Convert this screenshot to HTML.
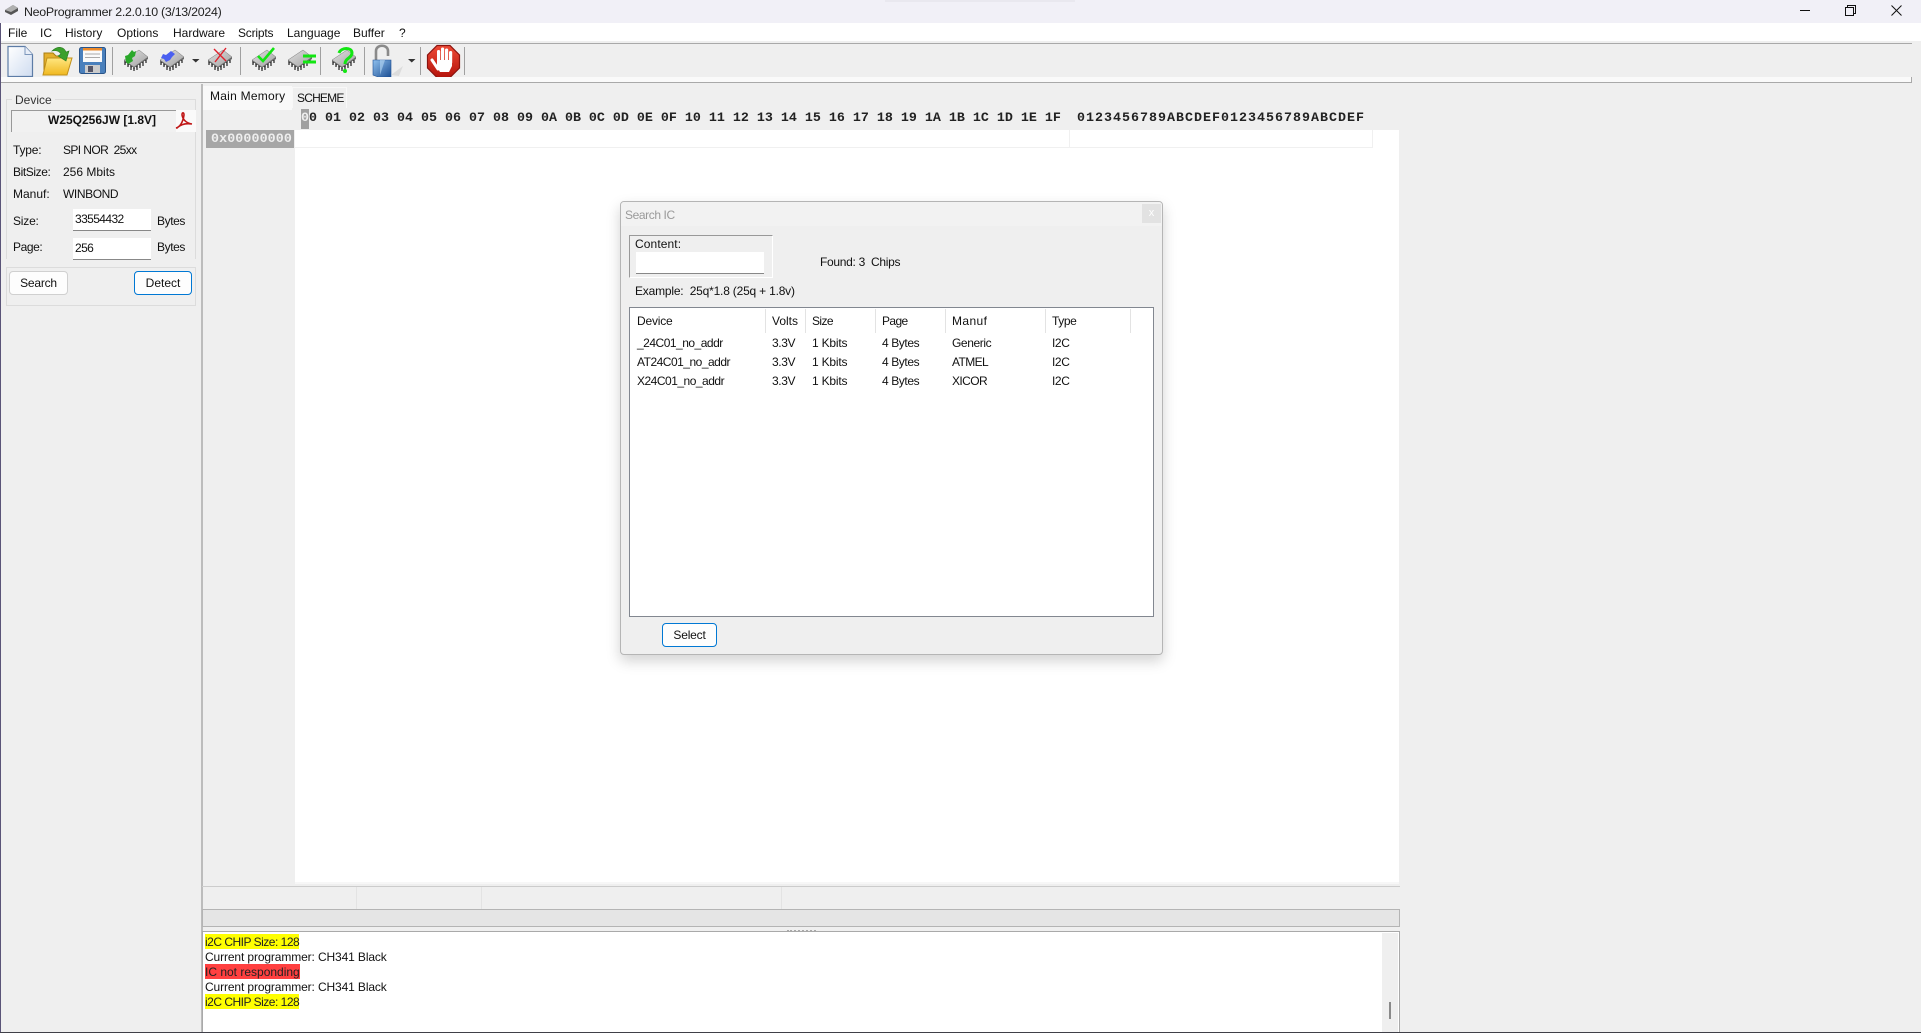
<!DOCTYPE html>
<html><head><meta charset="utf-8"><title>NeoProgrammer</title>
<style>
html,body{margin:0;padding:0;width:1921px;height:1033px;overflow:hidden;background:#efefef}
body{position:relative;font-family:"Liberation Sans",sans-serif;font-size:12px;color:#111}
.b{position:absolute;box-sizing:border-box}
.t{position:absolute;white-space:nowrap;line-height:16px;height:16px}
.m{position:absolute;white-space:nowrap;line-height:18px;font-family:"Liberation Mono",monospace;font-weight:bold;font-size:13.33px;color:#222}
.btn{position:absolute;box-sizing:border-box;background:#fdfdfd;border:1px solid #d0d0d0;border-radius:4px;text-align:center;line-height:22px}
.blue{border-color:#0078d4}
.s{position:absolute;width:1px;background:#e3e3e3}
.a{letter-spacing:-.2px}.c{letter-spacing:-.4px}.d{letter-spacing:-.6px}
</style></head><body>
<!-- title bar -->
<div class="b" style="left:0;top:0;width:1921px;height:23px;background:#f1f0f7"></div>
<div class="b" style="left:885px;top:0;width:190px;height:2px;background:#e9e8ef"></div>
<svg class="b" style="left:5px;top:4px" width="13" height="12"><path d="M0 6L8 1l5 3v3l-7 4-6-3z" fill="#555"/><path d="M0 6L8 1l5 3-7 4z" fill="#b0b0b0"/></svg>
<div class="t" style="left:24px;top:4px;font-size:12.4px;color:#222;letter-spacing:-.27px">NeoProgrammer 2.2.0.10 (3/13/2024)</div>
<svg class="b" style="left:1795px;top:0" width="126" height="23" fill="none" stroke="#111" stroke-width="1">
<path d="M5 10.5h10"/><path d="M50.5 7.5h8v8h-8zM52.5 7.5v-2h8v8h-2"/><path d="M96.5 5.5l10 10M106.5 5.5l-10 10"/></svg>
<!-- menu -->
<div class="b" style="left:0;top:23px;width:1921px;height:18px;background:#fff"></div>
<div class="t" style="left:8px;top:25px">File</div><div class="t" style="left:40px;top:25px">IC</div><div class="t" style="left:65px;top:25px">History</div><div class="t" style="left:117px;top:25px">Options</div><div class="t" style="left:173px;top:25px">Hardware</div><div class="t a" style="left:238px;top:25px">Scripts</div><div class="t" style="left:287px;top:25px">Language</div><div class="t" style="left:353px;top:25px">Buffer</div><div class="t" style="left:399px;top:25px">?</div>
<div class="b" style="left:0;top:43px;width:1912px;height:1px;background:#a9a9a9"></div>
<!-- toolbar icons -->
<svg class="b" style="left:0;top:40px" width="480" height="42" viewBox="0 40 480 42">
<defs>
<linearGradient id="doc" x1="0" y1="0" x2="1" y2="1"><stop offset="0" stop-color="#fff"/><stop offset="1" stop-color="#cfdcf0"/></linearGradient>
<linearGradient id="fold" x1="0" y1="0" x2="0" y2="1"><stop offset="0" stop-color="#ffe680"/><stop offset="1" stop-color="#f0b820"/></linearGradient>
<linearGradient id="chip" x1="0" y1="0" x2="1" y2="1"><stop offset="0" stop-color="#e2e2e2"/><stop offset="1" stop-color="#a0a0a0"/></linearGradient>
<linearGradient id="lock" x1="0" y1="0" x2="1" y2="1"><stop offset="0" stop-color="#8fc0ee"/><stop offset="1" stop-color="#1c4f94"/></linearGradient>
<linearGradient id="red" x1="0" y1="0" x2="0" y2="1"><stop offset="0" stop-color="#ee4a36"/><stop offset="1" stop-color="#b5140c"/></linearGradient>
<g id="c">
<path d="M0 11L15 1l9 7L10 18z" fill="url(#chip)" stroke="#777" stroke-width=".5"/>
<path d="M0 11v2l10 7 14-10V8L10 18z" fill="#6a6a6a"/>
<path d="M1 13v3M4 15v3M7 17v4M10 19v3M13 17v4M16 15v4M19 13v4M22 11v3" stroke="#222" stroke-width="1.2"/>
<path d="M2.5 14v2M5.5 16v3M8.5 18v3M11.5 18v3M14.5 16v3M17.500 14v3M20.500 12v3" stroke="#f4f4f4" stroke-width="1"/>
</g>
</defs>
<!-- new -->
<path d="M8 46.5h17l7.5 8v22H8z" fill="url(#doc)" stroke="#5d7ca6" stroke-width="1.2"/><path d="M25 46.5v8h7.5" fill="#e8eef8" stroke="#7d97bb"/>
<!-- open -->
<path d="M44 53h9l3 3h10v18H44z" fill="#e5b02c" stroke="#a87c10"/><path d="M47 58h25l-5 17H43z" fill="url(#fold)" stroke="#c0901a"/>
<path d="M52 51c6-6 12-4 14 1l3-1-3 10-8-5 3-2c-2-3-5-4-9-3z" fill="#3aa02c" stroke="#2a7a20" stroke-width=".6"/>
<!-- save -->
<rect x="79.5" y="47.5" width="26" height="26" rx="2" fill="#4a80bc" stroke="#2a5488"/><rect x="83" y="48" width="19" height="14" fill="#fafafa"/><rect x="83" y="48" width="19" height="2.5" fill="#ec8a2a"/><path d="M85 54h15M85 57.5h15" stroke="#aaa"/><rect x="85" y="65" width="15" height="8" fill="#ccc"/><rect x="88" y="66" width="5" height="6" fill="#556"/>
<path d="M112.5 47v28M240.5 47v28M320.5 47v28M364.5 47v28M420.5 47v28M464.5 47v28" stroke="#a0a0a0"/>
<!-- chips -->
<use href="#c" x="124" y="49"/><path d="M126 62l-1-6 3-1 4-5 2 2 2-1-1 5-3 2 1 3-5 3z" fill="#2aa82a"/>
<use href="#c" x="160" y="49"/><path d="M161 58l2-4 3 1 5-4 4 3-3 3-2 3-4 2-2-3z" fill="#4a5ff0"/>
<path d="M192 59h7.5l-3.75 3.5z" fill="#333"/>
<use href="#c" x="208" y="49"/><path d="M214 49l12 12M226 48l-11 14" stroke="#e0202c" stroke-width="1.4"/>
<use href="#c" x="252" y="49"/><path d="M258 56l5 5 11-13" stroke="#12e612" stroke-width="2.6" fill="none"/>
<use href="#c" x="288" y="49"/><path d="M303 56h13M303 62h13" stroke="#12e612" stroke-width="3"/>
<use href="#c" x="332" y="49"/><path d="M339 53c2-6 13-6 13 0 0 5-7 5-7 11" stroke="#12e612" stroke-width="3" fill="none"/><circle cx="345" cy="71" r="2" fill="#12e612"/>
<!-- lock -->
<path d="M376 61V51c0-7 12-7 12 0v5" fill="none" stroke="#8a8a8a" stroke-width="2.6"/>
<path d="M373 60h18v17h-13l-5-2z" fill="url(#lock)" stroke="#1c4f94" stroke-width=".6"/><path d="M380 60h5l-5 15z" fill="#b8d8f4" opacity=".6"/><path d="M391 75l12-9-4 10z" fill="#dcdcdc"/>
<path d="M408 59h7.5l-3.75 3.5z" fill="#333"/>
<!-- stop -->
<path d="M437 45.5h13l9.5 9.5v13l-9.5 9.5h-13l-9.5-9.5V55z" fill="url(#red)" stroke="#8a1410" stroke-width="1.2"/>
<g fill="#fff"><rect x="437" y="50" width="3.2" height="14" rx="1.5"/><rect x="441" y="47.500" width="3.200" height="16" rx="1.500"/><rect x="445" y="48.500" width="3.200" height="15" rx="1.500"/><rect x="449" y="51" width="3.200" height="13" rx="1.500"/><path d="M437 60h15v6l-3 6h-9l-3-5z"/></g>
<path d="M432 60l6 9" stroke="#fff" stroke-width="3" stroke-linecap="round"/>
</svg>
<div class="b" style="left:0;top:77px;width:1912px;height:6px;background:#fafafa;border-right:1px solid #a9a9a9;border-bottom:1px solid #a9a9a9"></div>
<!-- left edge -->
<div class="b" style="left:0;top:23px;width:1px;height:1010px;background:#5a5478"></div>
<div class="b" style="left:201px;top:84px;width:2px;height:949px;background:#bcbcbc"></div>
<!-- device group -->
<div class="b" style="left:6px;top:99px;width:190px;height:160px;border:1px solid #dcdcdc;border-bottom:0"></div>
<div class="t" style="left:12px;top:92px;background:#efefef;padding:0 3px;color:#333">Device</div>
<div class="b" style="left:11px;top:110px;width:165px;height:22px;border-left:1px solid #999;border-top:1px solid #999;background:#f1f1f1"></div>
<div class="t" style="left:48px;top:112px;font-weight:bold;font-size:12px">W25Q256JW [1.8V]</div>
<div class="b" style="left:176px;top:110px;width:20px;height:22px;background:#fafafa"></div>
<svg class="b" style="left:175px;top:111px" width="19" height="20" fill="none" stroke="#c01818" stroke-width="1.6"><path d="M1 17c4-1 7-6 8-13 0-3-2-3-2 0 1 5 4 8 10 9-6-1-11 0-15 4z"/></svg>
<div class="t a" style="left:13px;top:142px">Type:</div><div class="t d" style="left:63px;top:142px">SPI NOR&nbsp; 25xx</div>
<div class="t c" style="left:13px;top:164px">BitSize:</div><div class="t" style="left:63px;top:164px">256 Mbits</div>
<div class="t" style="left:13px;top:186px">Manuf:</div><div class="t c" style="left:63px;top:186px">WINBOND</div>
<div class="t a" style="left:13px;top:213px">Size:</div><div class="t c" style="left:13px;top:239px">Page:</div>
<div class="b" style="left:73px;top:209px;width:78px;height:22px;background:#fff;border-bottom:1px solid #888"></div>
<div class="b" style="left:73px;top:238px;width:78px;height:22px;background:#fff;border-bottom:1px solid #888"></div>
<div class="t d" style="left:75px;top:211px">33554432</div><div class="t d" style="left:75px;top:240px">256</div>
<div class="t c" style="left:157px;top:213px">Bytes</div><div class="t c" style="left:157px;top:239px">Bytes</div>
<div class="b" style="left:6px;top:267px;width:190px;height:39px;border:1px solid #dcdcdc"></div>
<div class="btn a" style="left:9px;top:271px;width:59px;height:24px">Search</div>
<div class="btn blue" style="left:134px;top:271px;width:58px;height:24px">Detect</div>
<!-- main -->
<div class="b" style="left:203px;top:86px;width:89px;height:24px;background:#f9f9f9"></div>
<div class="t" style="left:210px;top:88px;letter-spacing:.25px">Main Memory</div>
<div class="b" style="left:292px;top:87px;width:55px;height:21px;border:1px solid #f8f8f8;border-bottom:0"></div>
<div class="t" style="left:297px;top:90px;letter-spacing:-.8px">SCHEME</div>
<div class="b" style="left:206px;top:130px;width:89px;height:752px;background:#efefef"></div>
<div class="b" style="left:295px;top:130px;width:1104px;height:752px;background:#fff"></div>
<div class="b" style="left:295px;top:882px;width:1104px;height:2px;background:#f7f7f7"></div>
<div class="b" style="left:206px;top:130px;width:88px;height:18px;background:#a6a6a6"></div>
<div class="m" style="left:211px;top:130.500px;color:#eee;letter-spacing:.1px">0x00000000</div>
<div class="b" style="left:295px;top:147px;width:1077px;height:1px;background:#f0f0f0"></div>
<div class="b" style="left:1069px;top:130px;width:1px;height:18px;background:#f0f0f0"></div>
<div class="b" style="left:1372px;top:130px;width:1px;height:18px;background:#f0f0f0"></div>
<div class="b" style="left:301px;top:109px;width:8px;height:20px;background:#a0a0a0"></div>
<div class="m" style="left:301px;top:109.500px;white-space:pre"><span style="color:#eee">0</span>0 01 02 03 04 05 06 07 08 09 0A 0B 0C 0D 0E 0F 10 11 12 13 14 15 16 17 18 19 1A 1B 1C 1D 1E 1F</div>
<div class="m" style="left:1077px;top:109.500px;letter-spacing:1px">0123456789ABCDEF0123456789ABCDEF</div>
<!-- status -->
<div class="b" style="left:202px;top:886px;width:1198px;height:1px;background:#ccc"></div>
<div class="s" style="left:356px;top:887px;height:22px"></div><div class="s" style="left:481px;top:887px;height:22px"></div><div class="s" style="left:781px;top:887px;height:22px"></div>
<div class="b" style="left:202px;top:909px;width:1198px;height:18px;background:#e5e5e5;border:1px solid #b4b4b4"></div>
<div class="b" style="left:787px;top:930px;width:29px;height:0;border-top:2px dotted #a8a8a8"></div>
<!-- log -->
<div class="b" style="left:202px;top:931px;width:1198px;height:102px;background:#fff;border:1.5px solid #a9a9a9;border-bottom:0"></div>
<div class="b" style="left:1382px;top:933px;width:16px;height:100px;background:#efefef"></div>
<div class="b" style="left:1389px;top:1002px;width:2px;height:17px;background:#8a8a8a"></div>
<div class="t" style="left:205px;top:934px;line-height:16px;height:15px;background:#ff0;color:#222;letter-spacing:-.5px">i2C CHIP Size: 128</div>
<div class="t" style="left:205px;top:949px;line-height:16px;height:15px;letter-spacing:-.12px">Current programmer: CH341 Black</div>
<div class="t" style="left:205px;top:964px;line-height:16px;height:15px;background:#ff4040;color:#222">IC not responding</div>
<div class="t" style="left:205px;top:979px;line-height:16px;height:15px;letter-spacing:-.12px">Current programmer: CH341 Black</div>
<div class="t" style="left:205px;top:994px;line-height:16px;height:15px;background:#ff0;color:#222;letter-spacing:-.5px">i2C CHIP Size: 128</div>
<div class="b" style="left:0;top:1032px;width:1921px;height:1px;background:#404048"></div>
<!-- dialog -->
<div class="b" style="left:620px;top:201px;width:543px;height:454px;background:#efefef;border:1px solid #b5b5b5;border-radius:4px;box-shadow:0 6px 14px rgba(0,0,0,.18)"></div>
<div class="b" style="left:621px;top:202px;width:541px;height:24px;background:#f2f2f2;border-radius:3px 3px 0 0"></div>
<div class="t c" style="left:625px;top:207px;color:#9a9a9a">Search IC</div>
<div class="b" style="left:1142px;top:204px;width:19px;height:19px;background:#e2e2e2;color:#fff;text-align:center;line-height:18px;font-size:11px">x</div>
<div class="b" style="left:629px;top:235px;width:144px;height:43px;border:1px solid #fff;border-top-color:#999;border-left-color:#999"></div>
<div class="t" style="left:635px;top:236px;letter-spacing:.1px">Content:</div>
<div class="b" style="left:636px;top:252px;width:128px;height:22px;background:#fff;border-bottom:1px solid #888"></div>
<div class="t" style="left:820px;top:254px;letter-spacing:-.3px">Found: 3&nbsp; Chips</div>
<div class="t a" style="left:635px;top:283px">Example:&nbsp; 25q*1.8 (25q + 1.8v)</div>
<div class="b" style="left:629px;top:307px;width:525px;height:310px;background:#fff;border:1px solid #828790"></div>
<div class="s" style="left:765px;top:309px;height:24px"></div><div class="s" style="left:805px;top:309px;height:24px"></div><div class="s" style="left:875px;top:309px;height:24px"></div><div class="s" style="left:945px;top:309px;height:24px"></div><div class="s" style="left:1045px;top:309px;height:24px"></div><div class="s" style="left:1130px;top:309px;height:24px"></div>
<div class="t a" style="left:637px;top:313px">Device</div><div class="t" style="left:772px;top:313px">Volts</div><div class="t d" style="left:812px;top:313px">Size</div><div class="t d" style="left:882px;top:313px">Page</div><div class="t" style="left:952px;top:313px;letter-spacing:.4px">Manuf</div><div class="t c" style="left:1052px;top:313px">Type</div>
<div class="t" style="left:637px;top:335px;letter-spacing:-.5px">_24C01_no_addr</div><div class="t c" style="left:772px;top:335px">3.3V</div><div class="t a" style="left:812px;top:335px">1 Kbits</div><div class="t c" style="left:882px;top:335px">4 Bytes</div><div class="t c" style="left:952px;top:335px">Generic</div><div class="t c" style="left:1052px;top:335px">I2C</div>
<div class="t" style="left:637px;top:354px;letter-spacing:-.5px">AT24C01_no_addr</div><div class="t c" style="left:772px;top:354px">3.3V</div><div class="t a" style="left:812px;top:354px">1 Kbits</div><div class="t c" style="left:882px;top:354px">4 Bytes</div><div class="t d" style="left:952px;top:354px">ATMEL</div><div class="t c" style="left:1052px;top:354px">I2C</div>
<div class="t" style="left:637px;top:373px;letter-spacing:-.5px">X24C01_no_addr</div><div class="t c" style="left:772px;top:373px">3.3V</div><div class="t a" style="left:812px;top:373px">1 Kbits</div><div class="t c" style="left:882px;top:373px">4 Bytes</div><div class="t d" style="left:952px;top:373px">XICOR</div><div class="t c" style="left:1052px;top:373px">I2C</div>
<div class="btn blue a" style="left:662px;top:623px;width:55px;height:24px">Select</div>
</body></html>
